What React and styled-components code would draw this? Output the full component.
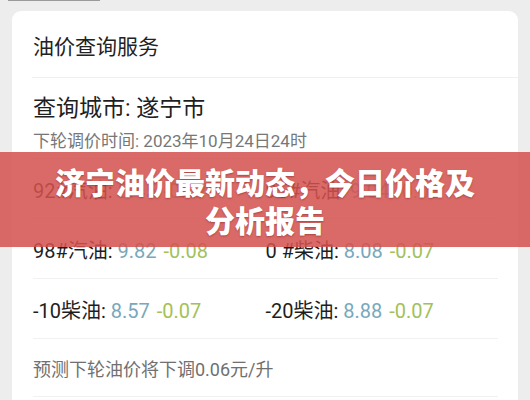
import React from "react";
import styled, { createGlobalStyle } from "styled-components";

const Global = createGlobalStyle`
  html, body { margin: 0; padding: 0; }
  body {
    width: 530px;
    height: 400px;
    overflow: hidden;
    background: #ededed;
    font-family: Roboto, "Noto Sans CJK SC", sans-serif;
  }
`;

const Page = styled.div`
  position: relative;
  width: 530px;
  height: 400px;
  overflow: hidden;
  background: #ededed;
`;

const TopStrip = styled.div`
  height: 1px;
  width: 92px;
  margin-left: 8px;
  background: #9a9a9a;
`;

const Card = styled.div`
  margin: 10px 12px 0 12px;
  background: #ffffff;
  border-radius: 9px 9px 0 0;
  height: 420px;
  display: flex;
  flex-direction: column;
`;

const Header = styled.div`
  margin-left: 20px;
  height: 67px;
  display: flex;
  align-items: center;
  border-bottom: 1px solid #efefef;
  box-sizing: border-box;
  padding-left: 1px;
  padding-top: 2px;
`;

const Title = styled.div`
  font-family: "Noto Sans CJK SC", sans-serif;
  font-size: 21px;
  color: #222;
`;

const Section = styled.div`
  margin: 0 20px 0 21px;
  border-bottom: 1px solid #f1f1f1;
  box-sizing: border-box;
`;

const CityBlock = styled(Section)`
  height: 81px;
  padding-top: 12px;
`;

const City = styled.div`
  font-size: 23px;
  color: #1f1f1f;
  line-height: 38px;
`;

const NextTime = styled.div`
  font-size: 17px;
  color: #777;
  line-height: 24px;
  margin-top: 1px;
`;

const Row = styled(Section)`
  height: 60px;
  display: grid;
  grid-template-columns: 1fr 1fr;
  align-items: center;
  font-size: 20px;
  padding-top: 1px;
`;

const Cell = styled.div`
  color: #1e1e1e;
  white-space: nowrap;
`;

const Price = styled.span`
  color: #78a8bb;
`;

const Change = styled.span`
  color: #a3c158;
  margin-left: 2px;
`;

const Predict = styled(Section)`
  height: 58px;
  display: flex;
  align-items: center;
  font-size: 18px;
  color: #707070;
`;

const Banner = styled.div`
  position: absolute;
  left: 0;
  right: 0;
  top: 152px;
  height: 95px;
  background: rgba(212, 82, 78, 0.86);
  display: flex;
  flex-direction: column;
  align-items: center;
  justify-content: center;
  color: #fff;
  font-family: "Noto Sans CJK SC", sans-serif;
  font-weight: 900;
  font-size: 30px;
  line-height: 38px;
  text-align: center;
  text-shadow: 0 1px 2px rgba(80, 0, 0, 0.35);
`;

const fuels = [
  [
    { label: "92#汽油", price: "8.45", change: "-0.07" },
    { label: "95#汽油", price: "9.04", change: "-0.07" },
  ],
  [
    { label: "98#汽油", price: "9.82", change: "-0.08" },
    { label: "0 #柴油", price: "8.08", change: "-0.07" },
  ],
  [
    { label: "-10柴油", price: "8.57", change: "-0.07" },
    { label: "-20柴油", price: "8.88", change: "-0.07" },
  ],
];

export default function App() {
  return (
    <Page>
      <Global />
      <TopStrip />
      <Card>
        <Header>
          <Title>油价查询服务</Title>
        </Header>
        <CityBlock>
          <City>查询城市: 遂宁市</City>
          <NextTime>下轮调价时间: 2023年10月24日24时</NextTime>
        </CityBlock>
        {fuels.map((pair, i) => (
          <Row key={i}>
            {pair.map((f) => (
              <Cell key={f.label}>
                {f.label}: <Price>{f.price}</Price> <Change>{f.change}</Change>
              </Cell>
            ))}
          </Row>
        ))}
        <Predict>预测下轮油价将下调0.06元/升</Predict>
      </Card>
      <Banner>
        <div>济宁油价最新动态，今日价格及</div>
        <div>分析报告</div>
      </Banner>
    </Page>
  );
}
